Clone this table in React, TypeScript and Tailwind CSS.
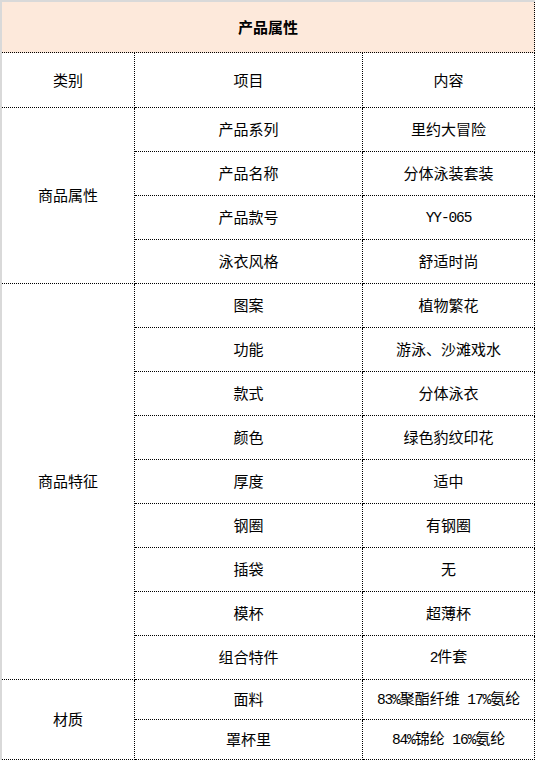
import React from "react";

const M = ({ children }: { children: React.ReactNode }) => (
  <span className="text-[14.5px] tracking-[-1.1px]" style={{ fontFamily: '"Liberation Mono", monospace' }}>
    {children}
  </span>
);

type Row = { item: React.ReactNode; value: React.ReactNode };

const groups: { name: string; h: string; rows: Row[] }[] = [
  {
    name: "商品属性",
    h: "h-[44px]",
    rows: [
      { item: "产品系列", value: "里约大冒险" },
      { item: "产品名称", value: "分体泳装套装" },
      { item: "产品款号", value: <M>YY-065</M> },
      { item: "泳衣风格", value: "舒适时尚" },
    ],
  },
  {
    name: "商品特征",
    h: "h-[44px]",
    rows: [
      { item: "图案", value: "植物繁花" },
      { item: "功能", value: "游泳、沙滩戏水" },
      { item: "款式", value: "分体泳衣" },
      { item: "颜色", value: "绿色豹纹印花" },
      { item: "厚度", value: "适中" },
      { item: "钢圈", value: "有钢圈" },
      { item: "插袋", value: "无" },
      { item: "模杯", value: "超薄杯" },
      { item: "组合特件", value: <><M>2</M>件套</> },
    ],
  },
  {
    name: "材质",
    h: "h-[40px]",
    rows: [
      { item: "面料", value: <><M>83%</M>聚酯纤维<M> 17%</M>氨纶</> },
      { item: "罩杯里", value: <><M>84%</M>锦纶<M> 16%</M>氨纶</> },
    ],
  },
];

const cell = "border-r border-b border-dotted border-black text-center align-middle p-0";

export default function App() {
  return (
    <div
      className="w-[535px] h-[760px] overflow-hidden bg-white border-t-2 border-l-2 border-[#d9d9d9] text-black text-[15px]"
      style={{ fontFamily: '"Noto Sans CJK SC", "Noto Sans", sans-serif' }}
    >
      <table className="table-fixed border-separate border-spacing-0 w-[533px]">
        <colgroup>
          <col className="w-[133px]" />
          <col className="w-[228px]" />
          <col className="w-[172px]" />
        </colgroup>
        <tbody>
          <tr className="h-[51px]">
            <td colSpan={3} className={`${cell} bg-[#fde9db] font-bold`}>
              产品属性
            </td>
          </tr>
          <tr className="h-[55px]">
            <td className={cell}>类别</td>
            <td className={cell}>项目</td>
            <td className={cell}>内容</td>
          </tr>
          {groups.map((g) =>
            g.rows.map((r, i) => (
              <tr key={g.name + i} className={g.h}>
                {i === 0 && (
                  <td rowSpan={g.rows.length} className={cell}>
                    {g.name}
                  </td>
                )}
                <td className={cell}>{r.item}</td>
                <td className={`${cell} whitespace-nowrap`}>{r.value}</td>
              </tr>
            ))
          )}
        </tbody>
      </table>
    </div>
  );
}
